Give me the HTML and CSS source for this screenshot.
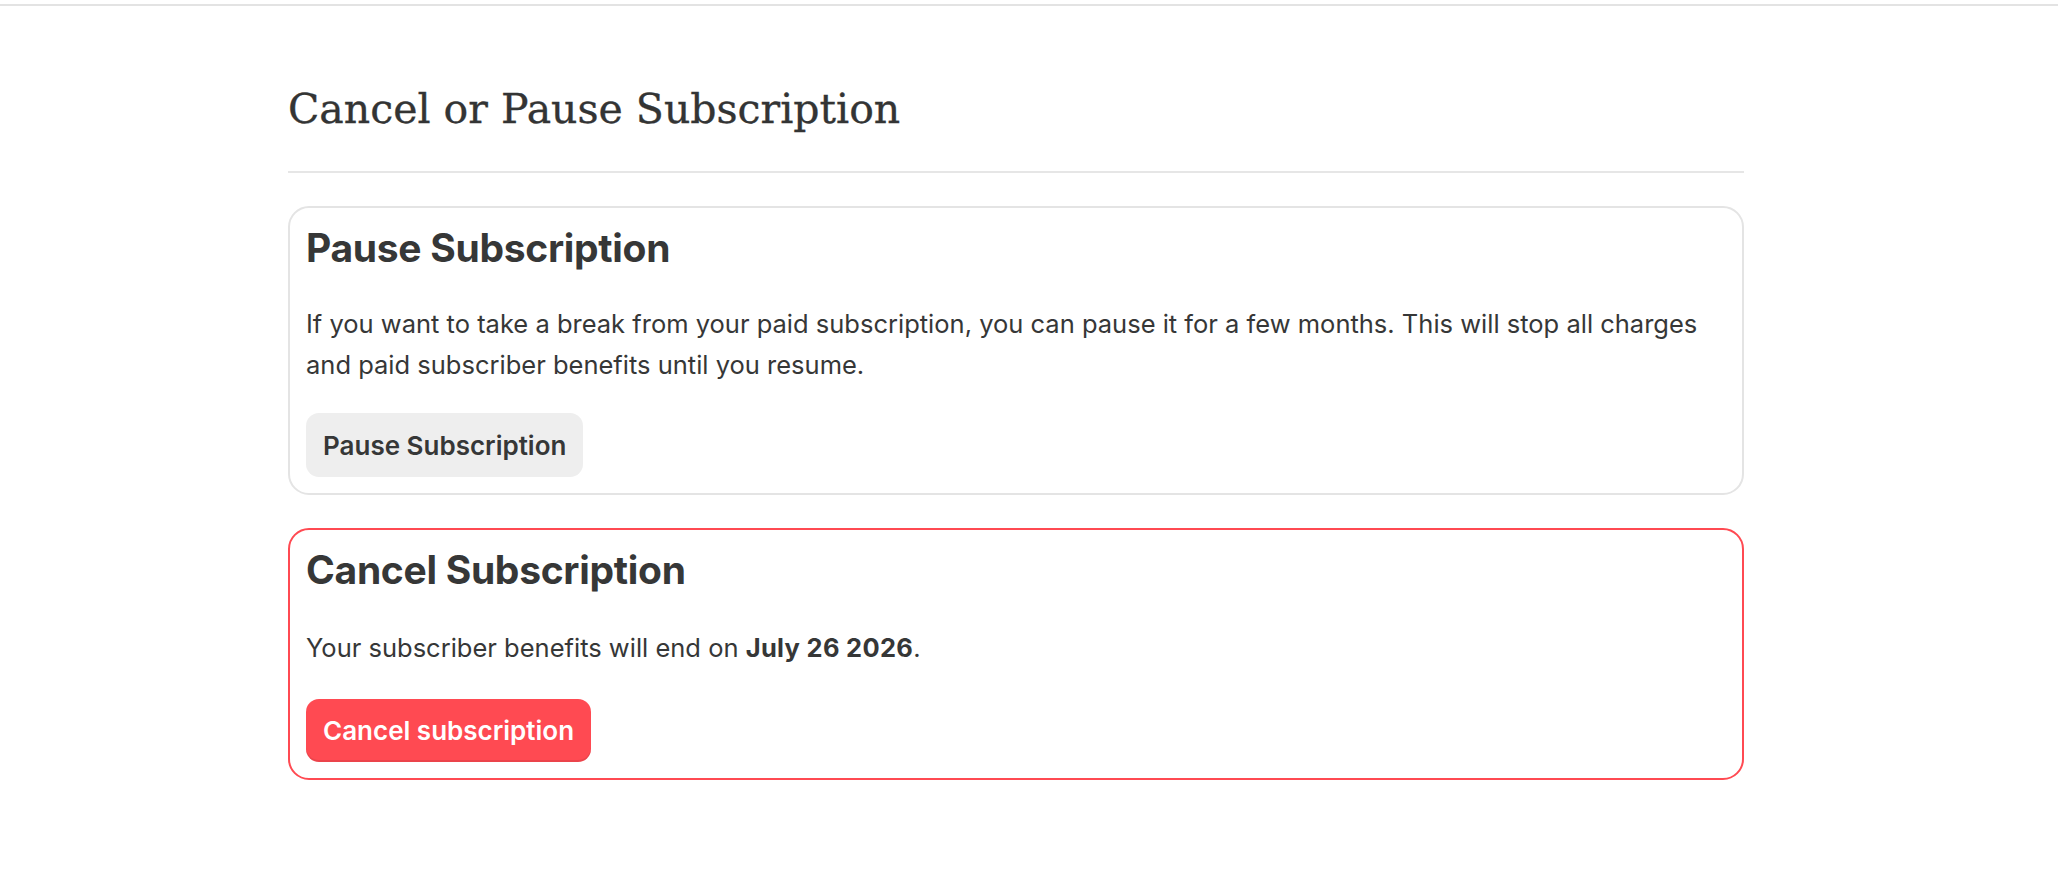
FILE: index.html
```html
<!DOCTYPE html>
<html lang="en">
<head>
<meta charset="utf-8">
<title>Cancel or Pause Subscription</title>
<link rel="stylesheet" href="styles.css">
</head>
<body>
<div class="topbar"></div>
<main class="page">
  <h1 class="page-title">Cancel or Pause Subscription</h1>
  <hr class="divider">
  <section class="card">
    <h2 class="card-title">Pause Subscription</h2>
    <p class="card-text">If you want to take a break from your paid subscription, you can pause it for a few months. This will stop all charges and paid subscriber benefits until you resume.</p>
    <button class="btn btn-secondary" type="button">Pause Subscription</button>
  </section>
  <section class="card card-danger">
    <h2 class="card-title">Cancel Subscription</h2>
    <p class="card-text">Your subscriber benefits will end on <strong>July 26 2026</strong>.</p>
    <button class="btn btn-danger" type="button">Cancel subscription</button>
  </section>
</main>
</body>
</html>
```

FILE: styles.css
```css
html, body {
  margin: 0;
  padding: 0;
  background: #ffffff;
}

body {
  font-family: Inter, "Noto Sans", "DejaVu Sans", sans-serif;
  color: #363737;
}

.topbar {
  height: 4px;
  border-bottom: 2px solid #e3e3e3;
}

.page {
  width: 1456px;
  margin-left: 288px;
  display: flex;
  flex-direction: column;
}

.page-title {
  margin: 78px 0 37px;
  font-family: "DejaVu Serif", "Liberation Serif", serif;
  font-weight: 400;
  font-size: 41px;
  line-height: 50px;
  color: #333434;
  -webkit-text-stroke: 0.35px #333434;
}

.divider {
  margin: 0 0 33px;
  border: 0;
  border-top: 2px solid #e6e6e6;
  height: 0;
}

.card {
  border: 2px solid #e4e4e4;
  border-radius: 21px;
  padding: 16px;
  margin-bottom: 33px;
  display: flex;
  flex-direction: column;
  align-items: flex-start;
}

.card-danger {
  border-color: #ff4a52;
}

.card-title {
  margin: 0 0 31px;
  font-size: 39px;
  font-weight: 700;
  line-height: 48px;
  letter-spacing: -0.3px;
  color: #363737;
}

.card-text {
  max-width: 1410px;
  margin: 0 0 28px;
  font-size: 25.5px;
  line-height: 41px;
  color: #363737;
}

.card-danger .card-title {
  margin-bottom: 33px;
}

.card-danger .card-text {
  margin-bottom: 31px;
}

.card-text strong {
  font-weight: 700;
  letter-spacing: 0.3px;
}

.btn {
  font-family: Inter, "Noto Sans", sans-serif;
  font-size: 26px;
  font-weight: 600;
  height: 64px;
  padding: 0 17px;
  border: 0;
  border-radius: 13px;
  cursor: pointer;
}

.btn-secondary {
  background: #eeeeee;
  color: #363737;
}

.btn-danger {
  height: 63px;
  background: #ff4a52;
  color: #ffffff;
  box-shadow: inset 0 -2px 0 rgba(0, 0, 0, 0.08);
}
```
